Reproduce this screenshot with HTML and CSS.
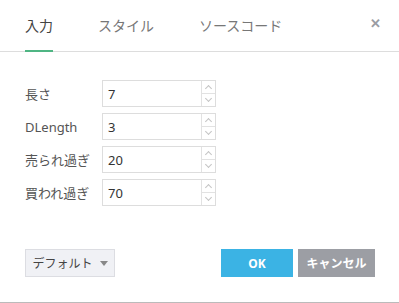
FILE: index.html
```html
<!DOCTYPE html>
<html lang="ja">
  <head>
    <meta charset="UTF-8" />
    <meta name="viewport" content="width=device-width, initial-scale=1.0" />
    <title>インジケーター設定</title>
    <link rel="stylesheet" href="styles.css">
  </head>
  <body>
    <div class="dialog">
      <div class="tabs">
        <div class="tab active">入力</div>
        <div class="tab">スタイル</div>
        <div class="tab">ソースコード</div>
        <span class="close">&#x2715;</span>
      </div>

      <form class="form">
        <label class="label" for="len">長さ</label>
        <div class="spin">
          <input id="len" class="spin-input" value="7" />
          <div class="spin-btns">
            <span class="arrow up"></span>
            <span class="arrow down"></span>
          </div>
        </div>

        <label class="label" for="dlen">DLength</label>
        <div class="spin">
          <input id="dlen" class="spin-input" value="3" />
          <div class="spin-btns">
            <span class="arrow up"></span>
            <span class="arrow down"></span>
          </div>
        </div>

        <label class="label" for="os">売られ過ぎ</label>
        <div class="spin">
          <input id="os" class="spin-input" value="20" />
          <div class="spin-btns">
            <span class="arrow up"></span>
            <span class="arrow down"></span>
          </div>
        </div>

        <label class="label" for="ob">買われ過ぎ</label>
        <div class="spin">
          <input id="ob" class="spin-input" value="70" />
          <div class="spin-btns">
            <span class="arrow up"></span>
            <span class="arrow down"></span>
          </div>
        </div>
      </form>

      <div class="footer">
        <button type="button" class="btn-default">デフォルト<span class="caret"></span></button>
        <div class="actions">
          <button type="button" class="btn-ok">OK</button>
          <button type="button" class="btn-cancel">キャンセル</button>
        </div>
      </div>
    </div>
  </body>
</html>
```

FILE: styles.css
```css
body {
  margin: 0;
  background: #fff;
  font-family: "Noto Sans", "Noto Sans CJK JP", sans-serif;
  color: #444;
}
.dialog {
  width: 399px;
  height: 303px;
  box-sizing: border-box;
  border-bottom: 1px solid #bbb;
  display: flex;
  flex-direction: column;
}
.tabs {
  display: flex;
  align-items: stretch;
  height: 51px;
  padding-left: 25px;
  border-bottom: 1px solid #ddd;
  position: relative;
}
.tab {
  display: flex;
  align-items: center;
  height: 50px;
  margin-right: 45px;
  font-size: 14px;
  color: #777;
  border-bottom: 2px solid transparent;
  margin-bottom: -1px;
}
.tab.active {
  color: #444;
  border-bottom-color: #4fb583;
}
.close {
  position: absolute;
  right: 18px;
  top: 14px;
  font-size: 13px;
  font-weight: bold;
  color: #9a9ca3;
}
.form {
  display: grid;
  grid-template-columns: 77px 114px;
  grid-auto-rows: 27px;
  row-gap: 6px;
  margin: 28px 0 0 25px;
  align-items: center;
}
.label {
  font-size: 13px;
  color: #555;
}
.spin {
  display: flex;
  height: 27px;
  box-sizing: border-box;
  border: 1px solid #ddd;
}
.spin-input {
  flex: 1;
  min-width: 0;
  border: none;
  outline: none;
  padding: 0 5px;
  font: inherit;
  font-size: 13px;
  color: #333;
}
.spin-btns {
  width: 13px;
  border-left: 1px solid #e2e2e2;
  display: flex;
  flex-direction: column;
}
.arrow {
  flex: 1;
  position: relative;
}
.arrow.up {
  border-bottom: 1px solid #e2e2e2;
}
.arrow::after {
  content: "";
  position: absolute;
  left: 4px;
  width: 4px;
  height: 4px;
  border-left: 1px solid #c4c4c4;
  border-top: 1px solid #c4c4c4;
}
.arrow.up::after {
  top: 5px;
  transform: rotate(45deg);
}
.arrow.down::after {
  top: 2px;
  transform: rotate(225deg);
}
.footer {
  display: flex;
  justify-content: space-between;
  margin: 43px 24px 0 25px;
}
.actions {
  display: flex;
  gap: 5px;
}
button {
  height: 28px;
  padding: 0;
  border: none;
  font-family: inherit;
  font-size: 12px;
  white-space: nowrap;
  cursor: pointer;
}
.btn-default {
  width: 90px;
  background: #f0f1f5;
  border: 1px solid #dcdde2;
  color: #444;
  display: flex;
  align-items: center;
  justify-content: center;
  gap: 7px;
}
.caret {
  width: 0;
  height: 0;
  border-left: 4px solid transparent;
  border-right: 4px solid transparent;
  border-top: 5px solid #888;
}
.btn-ok {
  width: 72px;
  background: #3bb3e4;
  color: #fff;
  font-weight: bold;
}
.btn-cancel {
  width: 77px;
  background: #9c9ea4;
  color: #fff;
  font-weight: bold;
}
```
